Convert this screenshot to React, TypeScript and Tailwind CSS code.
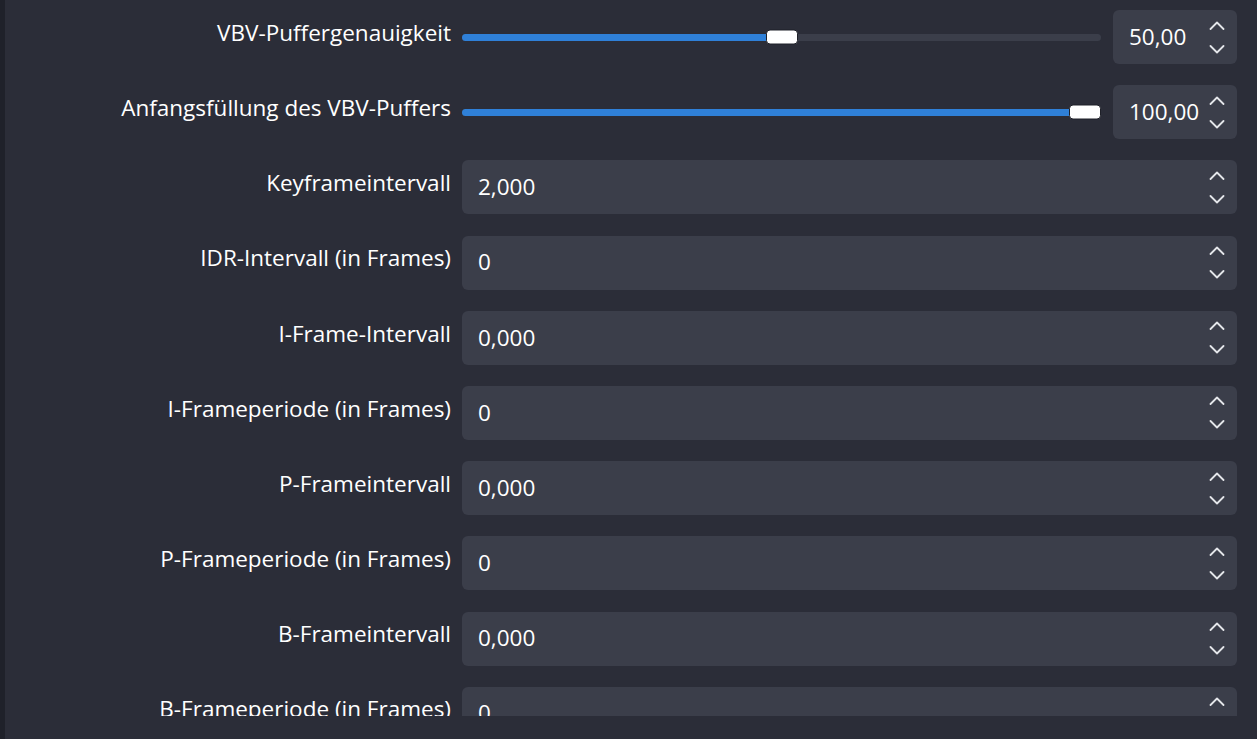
import React from 'react'

const font = { fontFamily: '"Open Sans", "Noto Sans", sans-serif' }

function Chevron({ up }: { up?: boolean }) {
  return (
    <svg width="16" height="9" viewBox="0 0 16 9" fill="none">
      <path
        d={up ? 'M1.5 8L8 1.5L14.5 8' : 'M1.5 1L8 7.5L14.5 1'}
        stroke="#e4e6ea"
        strokeWidth="1.8"
        strokeLinecap="round"
        strokeLinejoin="round"
      />
    </svg>
  )
}

function Arrows() {
  return (
    <div className="flex flex-col items-center gap-[15px] pr-[12px]">
      <Chevron up />
      <Chevron />
    </div>
  )
}

function SpinBox({ value, className }: { value: string; className?: string }) {
  return (
    <div className={`flex h-[54px] items-center justify-between rounded-[6px] bg-[#3b3e4a] pl-[16px] ${className ?? ''}`}>
      <span className="text-[22.5px] leading-none text-white">{value}</span>
      <Arrows />
    </div>
  )
}

function Slider({ pct }: { pct: number }) {
  return (
    <div className="relative flex h-[54px] flex-1 items-center">
      <div className="relative h-[7px] w-full rounded-full bg-[#3b3e4a]">
        <div
          className="absolute left-0 top-0 h-full rounded-full bg-[#2f80d8]"
          style={{ width: `calc(15.5px + (100% - 31px) * ${pct / 100})` }}
        />
        <div
          className="absolute top-1/2 h-[15px] w-[32px] -translate-y-1/2 rounded-[4px] border border-[#1e2028] bg-white"
          style={{ left: `calc((100% - 32px) * ${pct / 100})` }}
        />
      </div>
    </div>
  )
}

function Row({ label, children }: { label: string; children: React.ReactNode }) {
  return (
    <div className="flex h-[54px] items-center">
      <div className="w-[457px] shrink-0 pb-[8px] pr-[11px] text-right text-[22.5px] leading-none text-white">
        {label}
      </div>
      <div className="flex flex-1 items-center gap-[12px]">{children}</div>
    </div>
  )
}

const fields = [
  ['Keyframeintervall', '2,000'],
  ['IDR-Intervall (in Frames)', '0'],
  ['I-Frame-Intervall', '0,000'],
  ['I-Frameperiode (in Frames)', '0'],
  ['P-Frameintervall', '0,000'],
  ['P-Frameperiode (in Frames)', '0'],
  ['B-Frameintervall', '0,000'],
  ['B-Frameperiode (in Frames)', '0'],
]

export default function App() {
  return (
    <div className="flex h-[739px] w-[1257px] overflow-hidden bg-[#2b2d38]" style={font}>
      <div className="w-[5px] shrink-0 bg-[#1f212a]" />
      <div className="flex flex-1 flex-col">
        <div className="h-[716px] overflow-hidden pr-[20px] pt-[10px]">
          <div className="flex flex-col gap-[21.2px]">
            <Row label="VBV-Puffergenauigkeit">
              <Slider pct={50} />
              <SpinBox value="50,00" className="w-[124px]" />
            </Row>
            <Row label="Anfangsfüllung des VBV-Puffers">
              <Slider pct={100} />
              <SpinBox value="100,00" className="w-[124px]" />
            </Row>
            {fields.map(([label, value]) => (
              <Row key={label} label={label}>
                <SpinBox value={value} className="flex-1" />
              </Row>
            ))}
          </div>
        </div>
      </div>
    </div>
  )
}
